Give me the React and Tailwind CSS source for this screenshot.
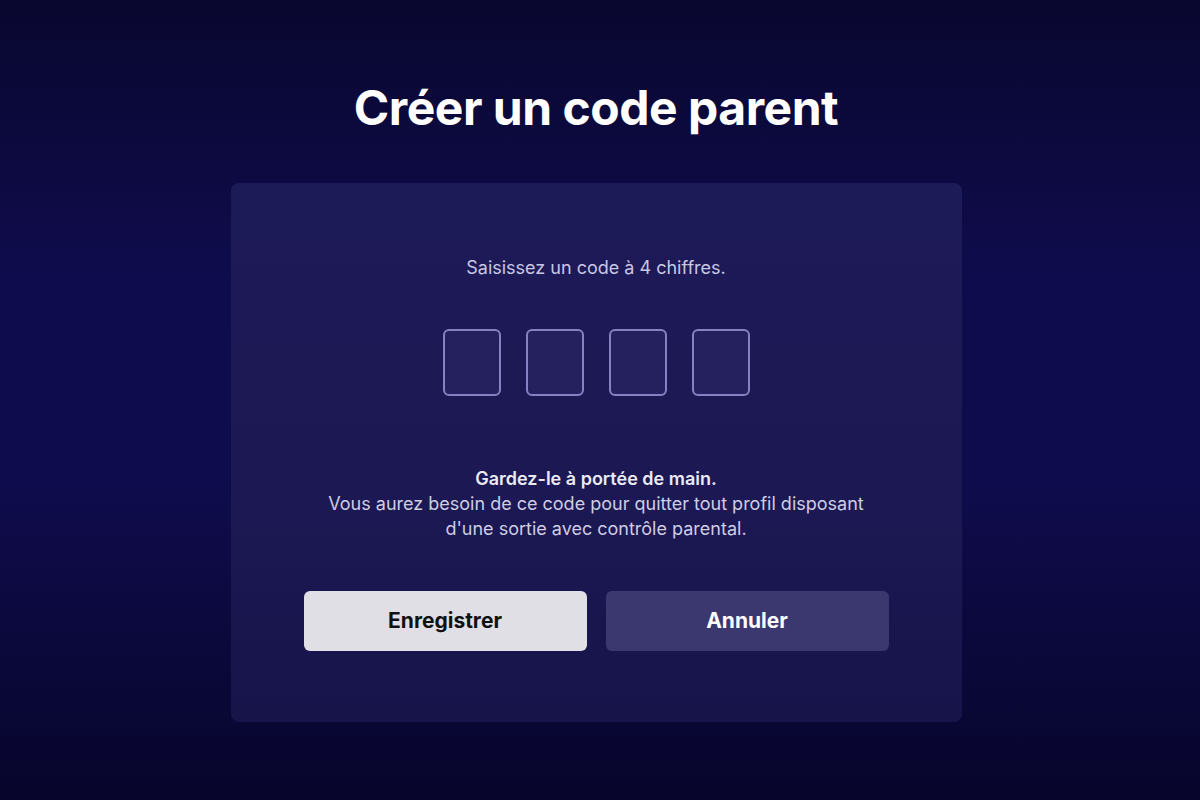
export default function App() {
  return (
    <div
      className="min-h-screen w-full flex flex-col items-center pt-[80px] pr-[8px] bg-[linear-gradient(180deg,#09072f_0%,#0f0c4d_35%,#0f0c4d_60%,#07052b_100%)]"
      style={{ fontFamily: 'Inter, "Noto Sans", sans-serif' }}
    >
      <h1 className="text-[48px] leading-[56px] font-bold text-white tracking-[-0.01em]">
        Créer un code parent
      </h1>

      <div className="mt-[47px] w-[731px] h-[539px] rounded-lg bg-[linear-gradient(180deg,#1d1a58_0%,#1b1853_60%,#17144a_100%)] flex flex-col items-center pt-[73px]">
        <p className="text-[18px] leading-6 text-[#c9c7e3]">Saisissez un code à 4 chiffres.</p>

        <div className="mt-[49px] flex gap-[25px]">
          {[0, 1, 2, 3].map(i => (
            <div
              key={i}
              className="w-[58px] h-[67px] rounded-md border-2 border-[#8682c2] bg-[#24215e]"
            />
          ))}
        </div>

        <div className="mt-[70px] text-center text-[18px] leading-[25px]">
          <p className="font-semibold text-[#ebeaf3]">Gardez-le à portée de main.</p>
          <p className="text-[#cfcde3]">
            Vous aurez besoin de ce code pour quitter tout profil disposant
            <br />
            d'une sortie avec contrôle parental.
          </p>
        </div>

        <div className="mt-[50px] flex gap-[19px]">
          <button className="w-[283px] h-[60px] rounded-md bg-[#e0dfe5] text-[#111] text-[21px] font-bold">
            Enregistrer
          </button>
          <button className="w-[283px] h-[60px] rounded-md bg-[#3b3870] text-white text-[21px] font-bold">
            Annuler
          </button>
        </div>
      </div>
    </div>
  )
}
